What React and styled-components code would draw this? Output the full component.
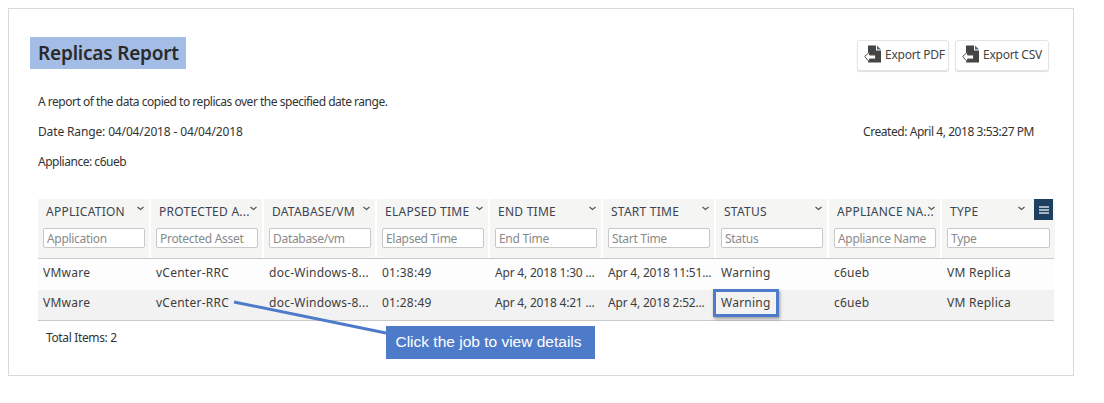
import React from 'react';
import styled, { createGlobalStyle } from 'styled-components';

const GlobalStyle = createGlobalStyle`
  body {
    margin: 0;
    background: #fff;
    font-family: "Noto Sans", "Liberation Sans", sans-serif;
    color: #333;
  }
`;

const Panel = styled.div`
  box-sizing: border-box;
  width: 1066px;
  height: 368px;
  margin: 8px 0 0 8px;
  padding: 28px 24px 0 21px;
  border: 1px solid #d9d9d9;
`;

const HeaderRow = styled.div`
  display: flex;
  justify-content: space-between;
  align-items: flex-start;
`;

const Title = styled.h1`
  margin: 0;
  height: 32px;
  padding: 0 7px 0 8px;
  background: #a4bde6;
  color: #2a2a2a;
  font-size: 19px;
  font-weight: 600;
  line-height: 32px;
  letter-spacing: -0.2px;
`;

const Actions = styled.div`
  display: flex;
  gap: 6px;
  margin-top: 3px;
`;

const ExportButton = styled.button`
  box-sizing: border-box;
  display: flex;
  align-items: center;
  gap: 3px;
  width: ${(p) => p.$width}px;
  height: 31px;
  padding: 0 0 3px 6px;
  background: #fff;
  border: 1px solid #e4e4e4;
  border-radius: 3px;
  box-shadow: 0 1px 1px #ddd;
  color: #444;
  font-family: inherit;
  font-size: 12px;
  letter-spacing: -0.25px;
`;

const Info = styled.div`
  margin: 16px 15px 0 8px;
  font-size: 12px;
  letter-spacing: -0.48px;
  line-height: 30px;
`;

const InfoRow = styled.div`
  display: flex;
  justify-content: space-between;
`;

const InfoText = styled.span`
  letter-spacing: ${(p) => p.$spacing}px;
`;

const TableArea = styled.div`
  position: relative;
  width: 1016px;
  margin: 22px 0 0 8px;
`;

const Columns = styled.div`
  display: grid;
  grid-template-columns: repeat(9, 113px);
  width: 1016px;
`;

const HeadRow = styled(Columns)`
  border-bottom: 1px solid #c9c9c9;
`;

const HeadCell = styled.div`
  box-sizing: border-box;
  position: relative;
  height: 59px;
  margin-right: 2px;
  padding: 0 3px 0 5px;
  background: #f5f5f3;

  &:last-child {
    margin-right: 0;
  }
`;

const HeadLabel = styled.div`
  padding: 4px 0 0 3px;
  height: 17px;
  color: #3b4450;
  font-size: 12px;
  line-height: 17px;
  letter-spacing: 0.25px;
  white-space: nowrap;
`;

const Chevron = styled.svg`
  position: absolute;
  top: 7px;
  right: ${(p) => p.$right}px;
  width: 7px;
  height: 5px;
`;

const FilterInput = styled.input`
  box-sizing: border-box;
  display: block;
  width: 102px;
  height: 20px;
  margin-top: 8px;
  padding: 0 3px;
  background: #fff;
  border: 1px solid #c8c8c8;
  border-radius: 2px;
  font-family: inherit;
  font-size: 12px;
  letter-spacing: -0.3px;

  &::placeholder {
    color: #8a8a8a;
    opacity: 1;
  }
`;

const WideInput = styled(FilterInput)`
  width: 103px;
`;

const MenuButton = styled.div`
  position: absolute;
  top: 0;
  right: 1px;
  display: flex;
  align-items: center;
  justify-content: center;
  width: 19px;
  height: 21px;
  background: #1e3f60;
`;

const DataRow = styled(Columns)`
  height: ${(p) => (p.$alt ? '30px' : '31px')};
  background: ${(p) => (p.$alt ? '#f2f2f2' : '#fdfdfd')};
  border-bottom: ${(p) => (p.$alt ? '1px solid #c9c9c9' : 'none')};
  line-height: ${(p) => (p.$alt ? '25px' : '27px')};
`;

const DataCell = styled.div`
  padding: 0 3px 0 5px;
  color: #3d3d3d;
  font-size: 12px;
  letter-spacing: ${(p) => (p.$tight ? '-0.2px' : '0.25px')};
  white-space: nowrap;
`;

const TotalItems = styled.div`
  margin: 8px 0 0 8px;
  font-size: 12px;
  letter-spacing: -0.36px;
  line-height: 17px;
`;

const Callout = styled.div`
  box-sizing: border-box;
  position: absolute;
  top: 127px;
  left: 348px;
  width: 209px;
  height: 33px;
  padding-right: 4px;
  background: #4e7bc9;
  color: #fff;
  font-family: "Liberation Sans", sans-serif;
  font-size: 15.5px;
  line-height: 32px;
  text-align: center;
`;

const Highlight = styled.div`
  box-sizing: border-box;
  position: absolute;
  top: 90px;
  left: 675px;
  width: 66px;
  height: 28px;
  border: 3px solid #4e7bc9;
  box-shadow: 1px 2px 3px rgba(0, 0, 0, 0.35);
`;

const Leader = styled.svg`
  position: absolute;
  top: 97px;
  left: 190px;
  width: 170px;
  height: 50px;
  overflow: visible;
`;

const columns = [
  { label: 'APPLICATION', filter: 'Application', chevron: 5 },
  { label: 'PROTECTED A...', filter: 'Protected Asset', chevron: 5 },
  { label: 'DATABASE/VM', filter: 'Database/vm', chevron: 5 },
  { label: 'ELAPSED TIME', filter: 'Elapsed Time', chevron: 5 },
  { label: 'END TIME', filter: 'End Time', chevron: 5 },
  { label: 'START TIME', filter: 'Start Time', chevron: 5 },
  { label: 'STATUS', filter: 'Status', chevron: 5 },
  { label: 'APPLIANCE NA...', filter: 'Appliance Name', chevron: 5 },
  { label: 'TYPE', filter: 'Type', chevron: 30 },
];

const rows = [
  ['VMware', 'vCenter-RRC', 'doc-Windows-8...', '01:38:49', 'Apr 4, 2018 1:30 ...', 'Apr 4, 2018 11:51...', 'Warning', 'c6ueb', 'VM Replica'],
  ['VMware', 'vCenter-RRC', 'doc-Windows-8...', '01:28:49', 'Apr 4, 2018 4:21 ...', 'Apr 4, 2018 2:52...', 'Warning', 'c6ueb', 'VM Replica'],
];

const ExportIcon = () => (
  <svg width="18" height="18" viewBox="0 0 18 18">
    <path d="M4 0.5h8v5h5v12H4z" fill="#444" />
    <path d="M13 0.5l4 4h-4z" fill="#4f6780" />
    <path d="M0.7 11.5L5.5 7v3h6v4h-6v3z" fill="#fff" stroke="#5c5048" strokeWidth="1" />
  </svg>
);

const App = () => {
  return (
    <>
      <GlobalStyle />
      <Panel>
        <HeaderRow>
          <Title>Replicas Report</Title>
          <Actions>
            <ExportButton $width={92}><ExportIcon />Export PDF</ExportButton>
            <ExportButton $width={94}><ExportIcon />Export CSV</ExportButton>
          </Actions>
        </HeaderRow>
        <Info>
          <div>A report of the data copied to replicas over the specified date range.</div>
          <InfoRow>
            <InfoText $spacing={-0.14}>Date Range: 04/04/2018 - 04/04/2018</InfoText>
            <InfoText $spacing={-0.45}>Created: April 4, 2018 3:53:27 PM</InfoText>
          </InfoRow>
          <div>Appliance: c6ueb</div>
        </Info>
        <TableArea>
          <HeadRow>
            {columns.map((col, i) => {
              const Input = i === 8 ? WideInput : FilterInput;
              return (
                <HeadCell key={col.label}>
                  <HeadLabel>{col.label}</HeadLabel>
                  <Chevron $right={col.chevron} viewBox="0 0 7 5">
                    <path d="M0.5 1l3 2.5 3-2.5" fill="none" stroke="#555" strokeWidth="1.2" />
                  </Chevron>
                  <Input placeholder={col.filter} />
                </HeadCell>
              );
            })}
          </HeadRow>
          <MenuButton>
            <svg width="10" height="8" viewBox="0 0 10 8">
              <path d="M0 1h10M0 4h10M0 7h10" stroke="#d5dde5" strokeWidth="1.4" />
            </svg>
          </MenuButton>
          {rows.map((row, r) => (
            <DataRow key={r} $alt={r === 1}>
              {row.map((value, c) => (
                <DataCell key={c} $tight={c === 4 || c === 5}>{value}</DataCell>
              ))}
            </DataRow>
          ))}
          <TotalItems>Total Items: 2</TotalItems>
          <Leader viewBox="0 0 170 50">
            <line x1="6" y1="6" x2="158" y2="37" stroke="#4e7bc9" strokeWidth="3" />
          </Leader>
          <Callout>Click the job to view details</Callout>
          <Highlight />
        </TableArea>
      </Panel>
    </>
  );
};

export default App;
